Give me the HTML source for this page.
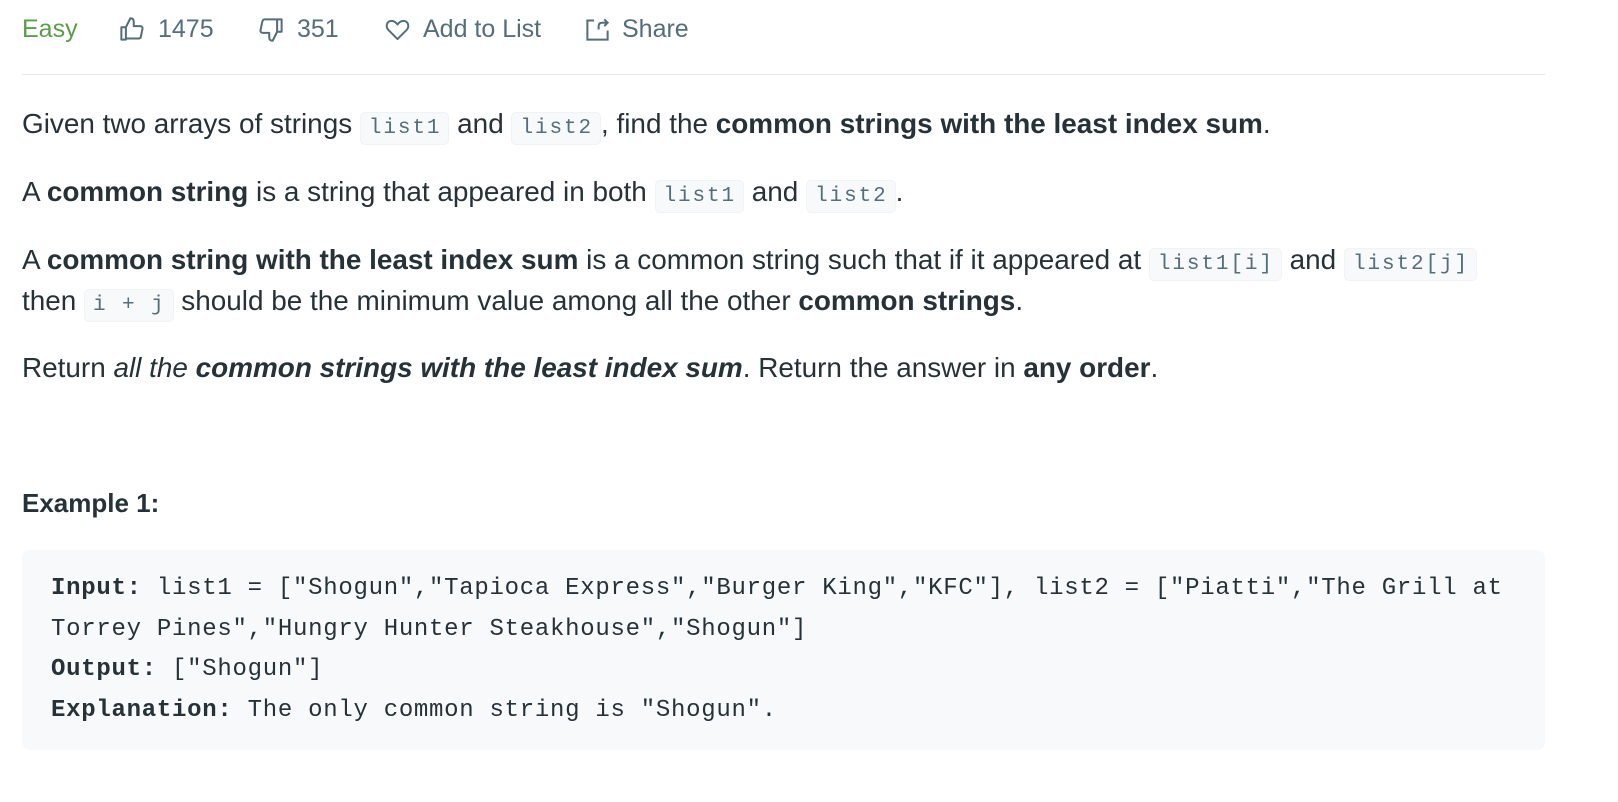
<!DOCTYPE html>
<html><head><meta charset="utf-8"><style>
*{margin:0;padding:0;box-sizing:border-box}
body{width:1618px;height:802px;background:#fff;font-family:"Liberation Sans",sans-serif;color:#262626;position:relative;overflow:hidden}
.bar{position:absolute;top:12px;left:0;height:34px;font-size:25px;color:#546e7a}
.bar span,.bar svg{position:absolute;top:0;line-height:34px;white-space:nowrap}
.bar svg{top:4px}
.e{color:#5a9e4c}
.hr{position:absolute;left:22px;top:74px;width:1523px;height:1px;background:#e8e8e8}
p{position:absolute;left:22px;font-size:27.9px;line-height:41px;color:#263238;white-space:nowrap}
code{font-family:"Liberation Mono",monospace;font-size:21px;letter-spacing:1.9px;background:#f7f9fa;color:#546e7a;padding:4px 7px 4px 8px;border-radius:5px;border:1px solid #f0f2f4;line-height:1}
b{font-weight:bold}
.h{position:absolute;left:22px;top:488px;font-size:26px;font-weight:bold;color:#263238}
.pre{position:absolute;left:22px;top:550px;width:1523px;height:200px;background:#f7f9fa;border-radius:8px;padding:19px 0 0 29px;font-family:"Liberation Mono",monospace;font-size:24px;line-height:40.5px;color:#263238;white-space:pre;letter-spacing:0.72px}
</style></head><body>
<div class="bar">
<span class="e" style="left:22px">Easy</span>
<svg style="left:118px" width="27" height="27" viewBox="0 0 24 24" fill="none" stroke="#546e7a" stroke-width="1.8" stroke-linejoin="round"><path d="M3 10h4v11H3zM7 10l4-8c2 0 3 1 3 3v4h6c1 0 2 1 1.8 2.2l-1.6 7.6c-.2 1-1 1.2-2 1.2H7"/></svg>
<span style="left:158px">1475</span>
<svg style="left:258px" width="27" height="27" viewBox="0 0 24 24" fill="none" stroke="#546e7a" stroke-width="1.8" stroke-linejoin="round"><path d="M21 14h-4V3h4zM17 14l-4 8c-2 0-3-1-3-3v-4H4c-1 0-2-1-1.8-2.2l1.6-7.6C4 4.2 4.8 3 5.8 3H17"/></svg>
<span style="left:297px">351</span>
<svg style="left:384px" width="27" height="27" viewBox="0 0 24 24" fill="none" stroke="#546e7a" stroke-width="1.8" stroke-linejoin="round"><path d="M12 20.5L4 12.5C1.5 10 2 5.5 5.5 4.5c2.5-.7 4.5.5 6.5 3 2-2.5 4-3.7 6.5-3 3.5 1 4 5.5 1.5 8z"/></svg>
<span style="left:423px">Add to List</span>
<svg style="left:584px" width="27" height="27" viewBox="0 0 24 24" fill="none" stroke="#546e7a" stroke-width="1.8"><path d="M9 4H3v17h18v-8M13 12V9c0-2 1-3 3-3h5M18 3l3 3-3 3"/></svg>
<span style="left:622px">Share</span>
</div>
<div class="hr"></div>
<p style="top:103px">Given two arrays of strings <code>list1</code> and <code>list2</code>, find the <b>common strings with the least index sum</b>.</p>
<p style="top:171px">A <b>common string</b> is a string that appeared in both <code>list1</code> and <code>list2</code>.</p>
<p style="top:239px">A <b>common string with the least index sum</b> is a common string such that if it appeared at <code>list1[i]</code> and <code>list2[j]</code></p>
<p style="top:280px">then <code>i + j</code> should be the minimum value among all the other <b>common strings</b>.</p>
<p style="top:347px">Return <i>all the</i> <b><i>common strings with the least index sum</i></b>. Return the answer in <b>any order</b>.</p>
<div class="h">Example 1:</div>
<div class="pre"><b>Input:</b> list1 = ["Shogun","Tapioca Express","Burger King","KFC"], list2 = ["Piatti","The Grill at
Torrey Pines","Hungry Hunter Steakhouse","Shogun"]
<b>Output:</b> ["Shogun"]
<b>Explanation:</b> The only common string is "Shogun".</div>
</body></html>
